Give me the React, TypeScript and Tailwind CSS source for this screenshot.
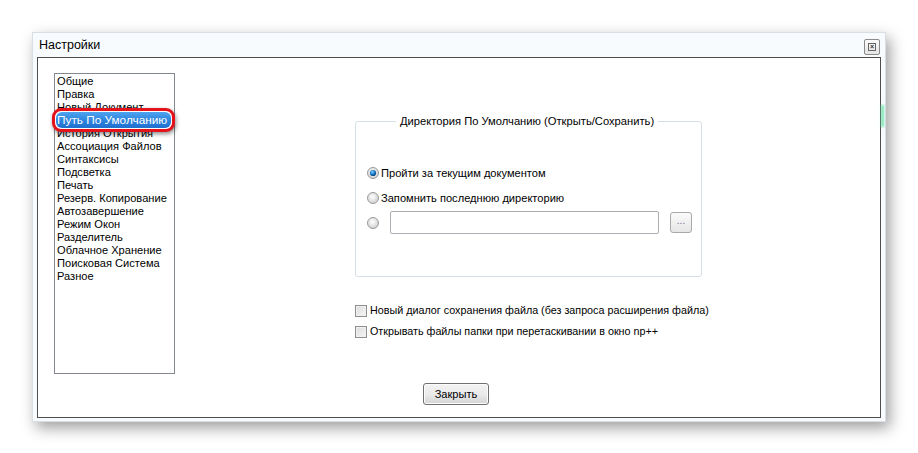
import React from "react";

const items = [
  "Общие",
  "Правка",
  "Новый Документ",
  "Путь По Умолчанию",
  "История Открытия",
  "Ассоциация Файлов",
  "Синтаксисы",
  "Подсветка",
  "Печать",
  "Резерв. Копирование",
  "Автозавершение",
  "Режим Окон",
  "Разделитель",
  "Облачное Хранение",
  "Поисковая Система",
  "Разное",
];

function Radio({ checked }: { checked?: boolean }) {
  return (
    <svg width="12" height="12" viewBox="0 0 12 12" className="shrink-0">
      <defs>
        <radialGradient id="rg" cx="45%" cy="40%" r="60%">
          <stop offset="0%" stopColor="#ffffff" />
          <stop offset="100%" stopColor="#cfcfcf" />
        </radialGradient>
        <radialGradient id="rb" cx="40%" cy="35%" r="65%">
          <stop offset="0%" stopColor="#7fd0ff" />
          <stop offset="60%" stopColor="#1677c4" />
          <stop offset="100%" stopColor="#0a3f7a" />
        </radialGradient>
      </defs>
      <circle cx="6" cy="6" r="5.5" fill="url(#rg)" stroke="#9a9a9a" strokeWidth="1" />
      {checked && <circle cx="6" cy="6" r="3.1" fill="url(#rb)" />}
    </svg>
  );
}

function Check() {
  return (
    <span className="inline-block w-[12px] h-[12px] shrink-0 border border-[#8f8f8f] bg-gradient-to-br from-[#dcdcdc] to-[#f6f6f6] shadow-[inset_0_0_0_1px_#f0f0f0]" />
  );
}

export default function App() {
  return (
    <div
      className="w-[918px] h-[453px] bg-white overflow-hidden relative"
      style={{ fontFamily: '"Liberation Sans", Arial, sans-serif' }}
    >
      <div className="ml-[32px] mt-[32px] w-[854px] h-[390px] relative bg-[#f7fbfd] border border-[#d8dee3] shadow-[4px_6px_14px_rgba(0,0,0,0.38)] flex flex-col">
        {/* title bar */}
        <div className="h-[24px] flex items-center justify-between pl-[6px] pr-[5px]">
          <span className="text-[12.5px] text-black leading-none mt-[1px]">Настройки</span>
          <span className="w-[16px] h-[16px] mt-[3px] rounded-[2px] border border-[#8a8a8a] bg-gradient-to-b from-[#fafafa] to-[#e4e4e4] flex items-center justify-center">
            <span className="w-[8px] h-[8px] border border-[#666] flex items-center justify-center text-[7px] leading-none text-[#333] font-bold">×</span>
          </span>
        </div>
        {/* content */}
        <div className="mx-[4px] h-[361px] border border-[#4d4d4d] bg-white flex flex-col text-[11.1px] text-black relative">
          <div className="flex">
            {/* list */}
            <div className="ml-[16px] mt-[15px] w-[121px] h-[301px] border border-[#828790] bg-white pl-[2px] pt-[1px] relative">
              {items.map((t) => (
                <div key={t} className="h-[13px] leading-[13px] whitespace-nowrap">
                  {t}
                </div>
              ))}
            </div>
            {/* right */}
            <div className="ml-[180px] flex flex-col">
              <div className="mt-[63px] w-[347px] h-[156px] border border-[#d5dfe5] rounded-[3px] relative">
                <div className="absolute -top-[8px] left-[40px] bg-white px-[4px] leading-[14px] whitespace-nowrap text-[11.2px]">
                  Директория По Умолчанию (Открыть/Сохранить)
                </div>
                <div className="pl-[11px] pt-[44px] flex flex-col">
                  <div className="flex items-center h-[14px]">
                    <Radio checked />
                    <span className="ml-[2px]">Пройти за текущим документом</span>
                  </div>
                  <div className="flex items-center h-[14px] mt-[11px]">
                    <Radio />
                    <span className="ml-[2px]">Запомнить последнюю директорию</span>
                  </div>
                  <div className="flex items-center mt-[6px]">
                    <Radio />
                    <div className="ml-[11px] w-[269px] h-[23px] border border-[#abadb3] rounded-[2px] bg-white" />
                    <div className="ml-[11px] w-[22px] h-[21px] border border-[#a9a9a9] rounded-[3px] bg-gradient-to-b from-[#fafafa] to-[#e6e6e6] flex items-center justify-center text-[10px] text-[#7a6aa0] leading-none pb-[3px]">
                      ...
                    </div>
                  </div>
                </div>
              </div>
              <div className="mt-[27px] flex flex-col gap-[8px] text-[10.75px]">
                <div className="flex items-center gap-[3px] h-[13px]">
                  <Check />
                  <span className="whitespace-nowrap">Новый диалог сохранения файла (без запроса расширения файла)</span>
                </div>
                <div className="flex items-center gap-[3px] h-[13px]">
                  <Check />
                  <span className="whitespace-nowrap">Открывать файлы папки при перетаскивании в окно np++</span>
                </div>
              </div>
            </div>
          </div>
          <div className="pl-[385px] mt-[9px]">
            <div className="w-[66px] h-[22px] border border-[#707070] rounded-[3px] bg-gradient-to-b from-[#f2f2f2] via-[#ebebeb] to-[#d4d4d4] flex items-center justify-center shadow-[inset_0_0_0_1px_#fcfcfc]">
              Закрыть
            </div>
          </div>
          {/* highlight callout */}
          <div className="absolute left-[14px] top-[50px] w-[123px] h-[24px] rounded-[9px] border-[3px] border-[#e3121b] bg-white shadow-[1px_2px_4px_rgba(0,0,0,0.45)] p-[1px]">
            <div className="w-full h-full rounded-[6px] bg-gradient-to-b from-[#4ea3f0] via-[#2f86de] to-[#1f6fcf] text-white text-[11.8px] leading-[16px] pl-[1px] whitespace-nowrap overflow-hidden">
              Путь По Умолчанию
            </div>
          </div>
        </div>
        {/* green aero glow */}
        <div className="absolute right-[1px] top-[72px] w-[3px] h-[22px] bg-[#5fe0a0] blur-[1px] opacity-80" />
      </div>
    </div>
  );
}
